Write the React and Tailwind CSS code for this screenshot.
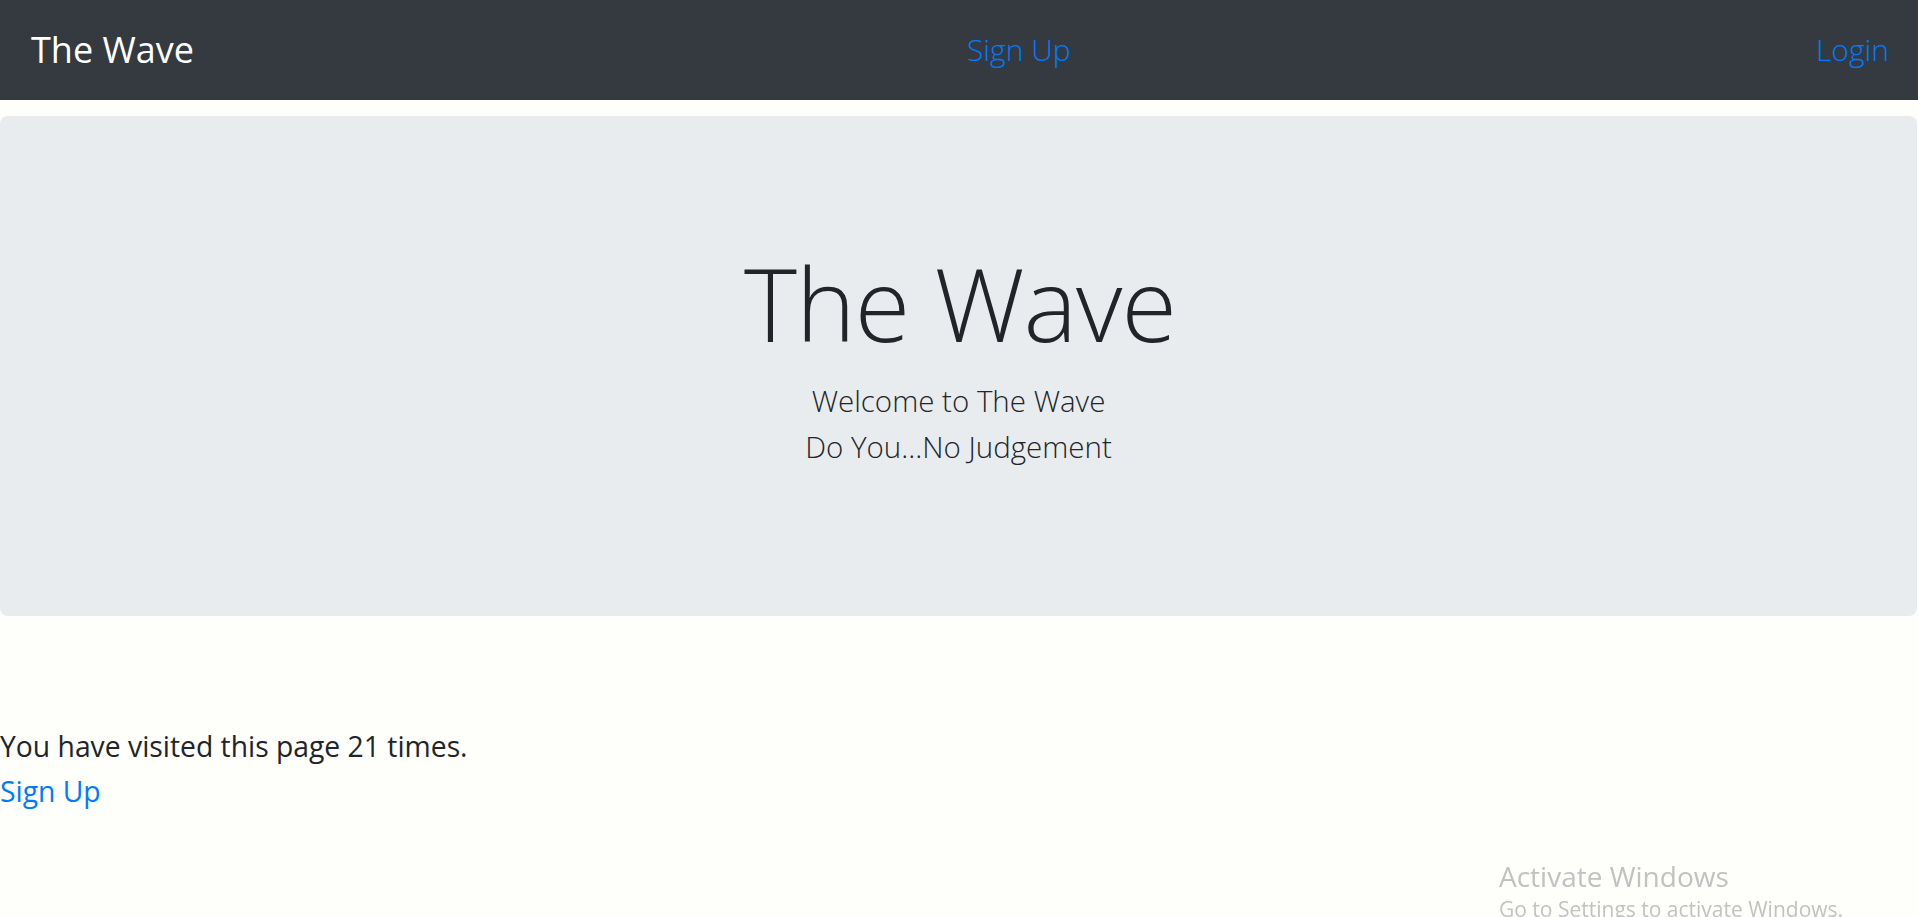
import React from "react";

const font = { fontFamily: '"Open Sans", "Noto Sans", sans-serif' };

export default function App() {
  const visits = 21;

  return (
    <div className="min-h-[917px] bg-[#fefefb] text-[#212529]" style={font}>
      <nav className="h-[100px] bg-[#343a40] flex items-center px-[31px]">
        <a href="#" className="text-white text-[36px] font-normal leading-none">The Wave</a>
        <a href="#" className="ml-[773px] text-[#007bff] text-[30px] font-light leading-none">Sign Up</a>
        <a href="#" className="ml-auto mr-[-2px] text-[#007bff] text-[30px] font-light leading-none">Login</a>
      </nav>

      <div className="mt-[16px] h-[500px] w-[1917px] bg-[#e9ecef] rounded-lg flex flex-col items-center pt-[125px]">
        <h1 className="text-[101px] font-light leading-[124px] tracking-[-1px] ml-[3px]">The Wave</h1>
        <p className="mt-[13px] text-[29.5px] font-light leading-[46px]">Welcome to The Wave</p>
        <p className="text-[29.5px] font-light leading-[46px]">Do You...No Judgement</p>
      </div>

      <div className="pt-[108px] text-[28.3px] leading-[45px]">
        <p>You have visited this page {visits} times.</p>
        <a href="#" className="text-[#007bff]">Sign Up</a>
      </div>

      <div className="fixed left-[1499px] top-[857px] text-[#c2c2c2] pointer-events-none">
        <div className="text-[28px] leading-[38px]">Activate Windows</div>
        <div className="text-[21px] leading-[28px]">Go to Settings to activate Windows.</div>
      </div>
    </div>
  );
}
